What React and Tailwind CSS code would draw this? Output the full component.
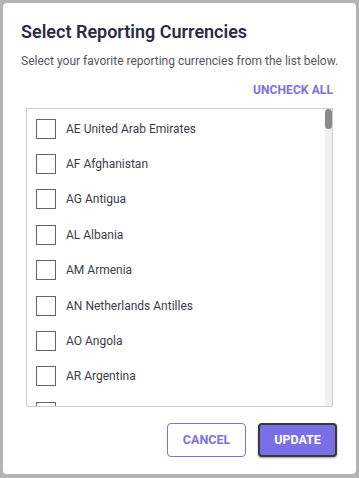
import React from "react";

const items = [
  ["AE", "United Arab Emirates"], ["AF", "Afghanistan"], ["AG", "Antigua"], ["AL", "Albania"],
  ["AM", "Armenia"], ["AN", "Netherlands Antilles"], ["AO", "Angola"], ["AR", "Argentina"],
  ["AT", ""],
];

export default function App() {
  return (
    <div
      className="w-[359px] h-[478px] bg-[#b4b4b4] pt-[3px] pl-[3px] pr-[3px]"
      style={{ fontFamily: "Roboto, 'Liberation Sans', sans-serif" }}
    >
      <div className="w-[353px] h-[471px] bg-white rounded-[4px] pt-[18px] px-[18px] pb-[17px] flex flex-col">
        <h1 className="text-[18px] leading-[22px] font-semibold text-[#2c2c40]">
          Select Reporting Currencies
        </h1>
        <p className="mt-[10px] text-[12px] leading-[16px] text-[#55555f] whitespace-nowrap">
          Select your favorite reporting currencies from the list below.
        </p>
        <div className="mt-[14px] mr-[5px] flex justify-end">
          <button className="text-[12px] leading-[14px] font-bold text-[#7b6fe8] tracking-[0.1px]">
            UNCHECK ALL
          </button>
        </div>
        <div className="relative mt-[11px] mx-[5px] h-[299px] border border-[#cfcfcf] overflow-hidden">
          <div className="pt-[2px] pr-[8px]">
            {items.map(([code, name]) => (
              <label key={code} className="flex items-center h-[35.4px] pl-[9px] gap-[10px] cursor-pointer">
                <span className="w-[20px] h-[20px] border border-[#5b6573] shrink-0 bg-white" />
                {name ? (
                  <span className="text-[12px] text-[#3c3c4a]">
                    {code} {name}
                  </span>
                ) : null}
              </label>
            ))}
          </div>
          <div className="absolute top-0 right-0 w-[7px] h-full bg-[#f0f0f0]">
            <div className="w-[7px] h-[20px] rounded-[4px] bg-[#8a8a8a]" />
          </div>
        </div>
        <div className="mt-auto flex justify-end gap-[12px] mr-[1px]">
          <button className="w-[79px] h-[34px] rounded-[4px] border border-[#7b6fe8] text-[#7b6fe8] text-[12.5px] font-bold bg-white">
            CANCEL
          </button>
          <button className="w-[79px] h-[34px] rounded-[4px] border-2 border-[#3a3a3a] bg-[#7b6fe8] text-white text-[12.5px] font-bold shadow-[0_1px_2px_rgba(0,0,0,0.4)]">
            UPDATE
          </button>
        </div>
      </div>
    </div>
  );
}
